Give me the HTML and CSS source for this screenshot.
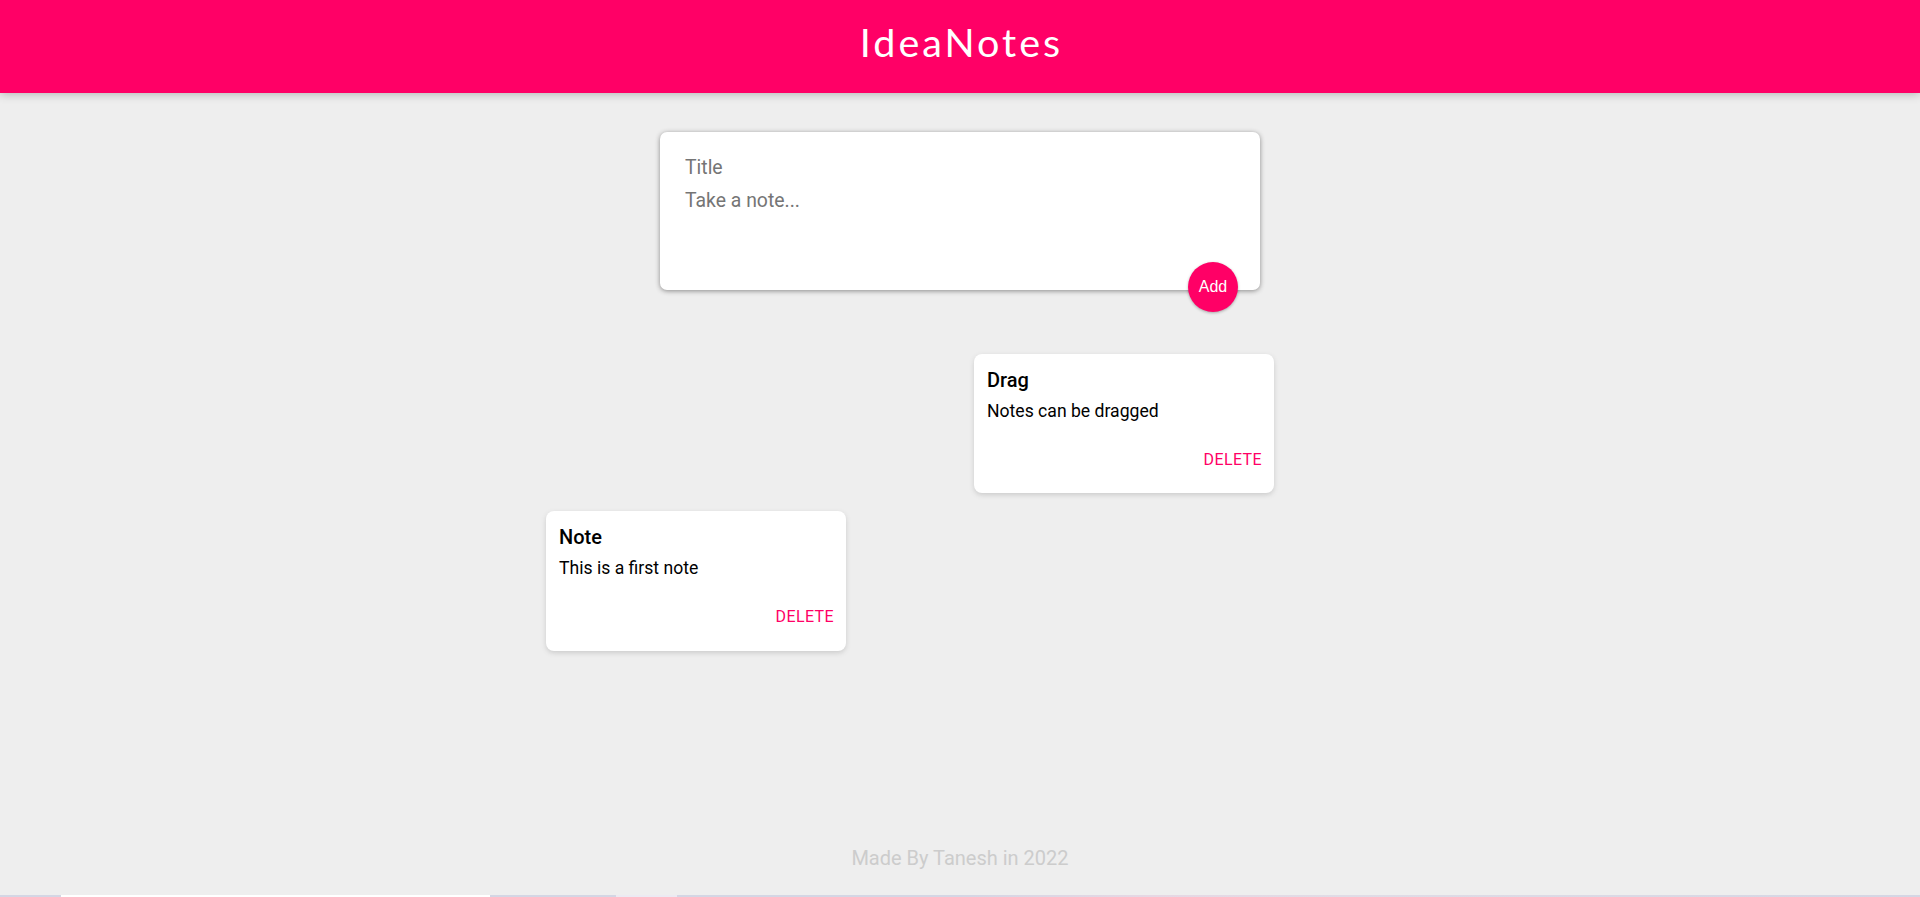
FILE: index.html
```html
<!DOCTYPE html>
<html lang="en">
<head>
<meta charset="utf-8">
<title>IdeaNotes</title>
<link rel="stylesheet" href="styles.css">
</head>
<body>
<header class="app-header">
  <h1 class="app-title">IdeaNotes</h1>
</header>
<main class="board">
  <form class="create-note">
    <input class="create-title" type="text" placeholder="Title">
    <textarea class="create-body" rows="3" placeholder="Take a note..."></textarea>
    <button class="add-btn" type="button">Add</button>
  </form>
  <div class="note note-drag">
    <h2 class="note-title">Drag</h2>
    <p class="note-text">Notes can be dragged</p>
    <div class="note-actions"><button class="delete-btn" type="button">DELETE</button></div>
  </div>
  <div class="note note-first">
    <h2 class="note-title">Note</h2>
    <p class="note-text">This is a first note</p>
    <div class="note-actions"><button class="delete-btn" type="button">DELETE</button></div>
  </div>
</main>
<footer class="app-footer">
  <p class="footer-text">Made By Tanesh in 2022</p>
</footer>
<div class="taskbar"><span class="tb-box"></span><span class="tb-box2"></span></div>
</body>
</html>
```
FILE: styles.css
```css
* { box-sizing: border-box; }
html, body { margin: 0; padding: 0; }
body {
  min-height: 100vh;
  display: flex;
  flex-direction: column;
  background: #eeeeee;
  font-family: Roboto, "Liberation Sans", Arial, sans-serif;
  overflow: hidden;
}
.app-header {
  height: 93px;
  background: #ff0066;
  padding-top: 19px;
  padding-left: 3px;
  box-shadow: 0 0 10px 0 rgba(0, 0, 0, 0.3);
  position: relative;
  z-index: 2;
}
.app-title {
  margin: 0;
  text-align: center;
  color: #fff;
  font-family: Lato, "Open Sans", sans-serif;
  font-weight: 400;
  font-size: 39.5px;
  line-height: 45.6px;
  letter-spacing: 3px;
}
.board {
  flex: 1;
  position: relative;
  padding-top: 39px;
}
.create-note {
  position: relative;
  width: 600px;
  height: 158px;
  margin: 0 auto;
  background: #fff;
  padding: 19px 21px;
  border-radius: 7px;
  box-shadow: 0 1px 5px rgb(138, 137, 137);
}
.create-title, .create-body {
  display: block;
  width: 100%;
  border: none;
  outline: none;
  padding: 4px;
  margin: 0;
  font-family: Roboto, sans-serif;
  font-size: 19.4px;
  line-height: 24px;
  color: #222;
  background: transparent;
  resize: none;
}
.create-title { height: 32px; }
.create-body { margin-top: 2px; height: 80px; }
.create-title::placeholder, .create-body::placeholder { color: #757575; }
.add-btn {
  position: absolute;
  right: 22px;
  bottom: -22px;
  width: 50px;
  height: 50px;
  border: none;
  border-radius: 50%;
  background: #ff0066;
  color: #fff;
  font-family: "Liberation Sans", Arial, sans-serif;
  font-size: 16px;
  padding: 0;
  box-shadow: 0 1px 3px rgba(0, 0, 0, 0.3);
}
.note {
  position: absolute;
  width: 300px;
  height: 140px;
  background: #fff;
  border-radius: 8px;
  box-shadow: 0 2px 5px #ccc;
  padding: 14px 12px 0 13px;
}
.note-drag { left: 974px; top: 261px; height: 139px; }
.note-first { left: 546px; top: 418px; }
.note-title {
  margin: 0;
  font-size: 20px;
  line-height: 24px;
  font-weight: 500;
  color: #000;
}
.note-text {
  margin: 8px 0 0;
  font-size: 17.6px;
  line-height: 22px;
  color: #000;
}
.note-actions {
  display: flex;
  justify-content: flex-end;
  margin-top: 28px;
}
.delete-btn {
  border: none;
  background: transparent;
  padding: 0;
  font-family: Roboto, sans-serif;
  font-size: 16px;
  line-height: 20px;
  letter-spacing: 0.4px;
  color: #ff0066;
}
.app-footer {
  padding-bottom: 25px;
  text-align: center;
}
.footer-text {
  margin: 0;
  font-size: 20px;
  line-height: 24px;
  color: #cccccc;
}
.taskbar {
  height: 2px;
  background: linear-gradient(90deg, #d4d6e4 0%, #d4d6e4 50%, #e6d8e4 60%, #e0dce6 70%, #d4d6e4 100%);
  display: flex;
}
.tb-box { margin-left: 61px; width: 429px; background: #ffffff; }
.tb-box2 { margin-left: 126px; width: 61px; background: #eceaf2; }
```
